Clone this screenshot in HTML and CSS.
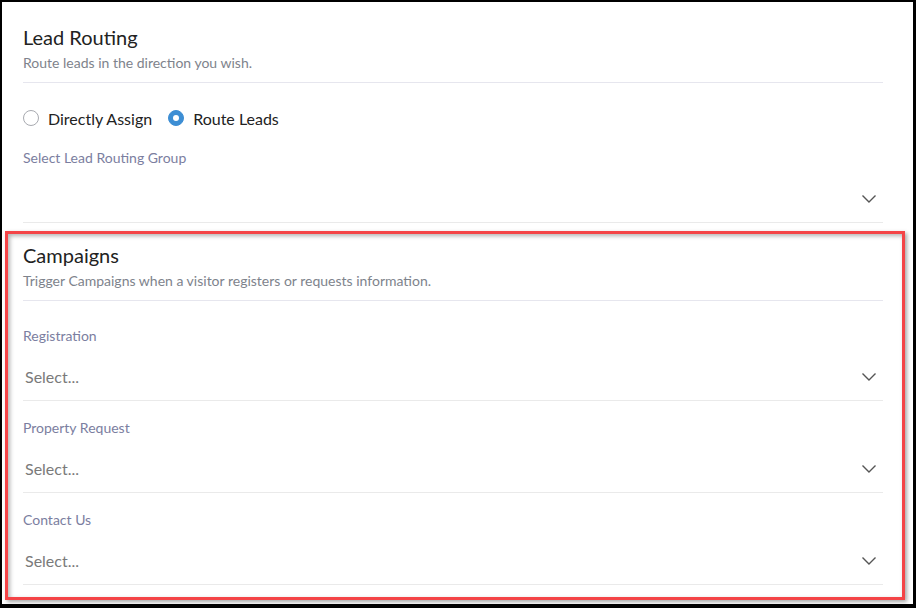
FILE: index.html
```html
<!DOCTYPE html>
<html lang="en">
<head>
	<meta charset="UTF-8">
	<meta name="viewport" content="width=device-width, initial-scale=1.0">
	<title>Lead Routing</title>
	<link rel="stylesheet" href="styles.css">
</head>
<body>
	<div class="page">
		<div class="head">
			<h2 class="title">Lead Routing</h2>
			<p class="sub">Route leads in the direction you wish.</p>
		</div>
		<div class="radios">
			<label class="radio"><span class="dot"></span>Directly Assign</label>
			<label class="radio on"><span class="dot"></span>Route Leads</label>
		</div>
		<div class="field top">
			<div class="label">Select Lead Routing Group</div>
			<div class="select">
				<span class="value"></span>
				<svg class="chev" width="16" height="10" viewBox="0 0 16 10"><path d="M1.5 1.5 L8 8 L14.5 1.5" fill="none" stroke="#555" stroke-width="1.4"/></svg>
			</div>
		</div>

		<div class="campaigns">
			<div class="head">
				<h2 class="title">Campaigns</h2>
				<p class="sub">Trigger Campaigns when a visitor registers or requests information.</p>
			</div>
			<div class="field first">
				<div class="label">Registration</div>
				<div class="select">
					<span class="value">Select...</span>
					<svg class="chev" width="16" height="10" viewBox="0 0 16 10"><path d="M1.5 1.5 L8 8 L14.5 1.5" fill="none" stroke="#555" stroke-width="1.4"/></svg>
				</div>
			</div>
			<div class="field">
				<div class="label">Property Request</div>
				<div class="select">
					<span class="value">Select...</span>
					<svg class="chev" width="16" height="10" viewBox="0 0 16 10"><path d="M1.5 1.5 L8 8 L14.5 1.5" fill="none" stroke="#555" stroke-width="1.4"/></svg>
				</div>
			</div>
			<div class="field">
				<div class="label">Contact Us</div>
				<div class="select">
					<span class="value">Select...</span>
					<svg class="chev" width="16" height="10" viewBox="0 0 16 10"><path d="M1.5 1.5 L8 8 L14.5 1.5" fill="none" stroke="#555" stroke-width="1.4"/></svg>
				</div>
			</div>
		</div>
	</div>
</body>
</html>
```

FILE: styles.css
```css
*{
	margin: 0;
	padding: 0;
	box-sizing: border-box;
}
html, body{
	background-color: #000;
	height: 100%;
	overflow: hidden;
}
body{
	font-family: Lato, "Open Sans", sans-serif;
	padding: 2px 3px 4px 2px;
}
.page{
	background-color: #fff;
	width: 911px;
	height: 602px;
	padding: 23px 30px 0 21px;
	overflow: hidden;
}
.head{
	border-bottom: 1px solid #e6e6ee;
	padding-bottom: 10px;
}
.title{
	font-size: 20px;
	line-height: 24px;
	font-weight: 400;
	color: #222;
}
.sub{
	margin-top: 5px;
	font-size: 14px;
	line-height: 18px;
	color: #7e838c;
}
.radios{
	display: flex;
	align-items: center;
	margin-top: 25px;
	height: 20px;
}
.radio{
	display: flex;
	align-items: center;
	font-size: 16px;
	color: #222;
	margin-right: 16px;
}
.dot{
	width: 16px;
	height: 16px;
	border-radius: 50%;
	border: 1px solid #a8aab0;
	margin-right: 9px;
	position: relative;
}
.radio.on .dot{
	background-color: #3d8ed4;
	border-color: #3d8ed4;
}
.radio.on .dot::after{
	content: "";
	position: absolute;
	left: 4px;
	top: 4px;
	width: 6px;
	height: 6px;
	border-radius: 50%;
	background-color: #fff;
}
.field{
	margin-top: 18px;
}
.field.top{
	margin-top: 21px;
}
.field.first{
	margin-top: 26px;
}
.label{
	font-size: 14px;
	line-height: 18px;
	color: #7b7ea0;
}
.select{
	margin-top: 10px;
	height: 46px;
	border-bottom: 1px solid #eaeaea;
	display: flex;
	align-items: center;
	justify-content: space-between;
	padding: 0 6px 2px 2px;
}
.value{
	font-size: 16px;
	color: #7a7a7a;
}
.chev{
	display: block;
}
.campaigns{
	margin: 8px -22px 0 -18px;
	border: 3px solid #f44447;
	padding: 9px 19px 12px 15px;
	box-shadow: 2px 2px 4px rgba(0,0,0,.35), inset 2px 2px 4px rgba(0,0,0,.3);
}
```
